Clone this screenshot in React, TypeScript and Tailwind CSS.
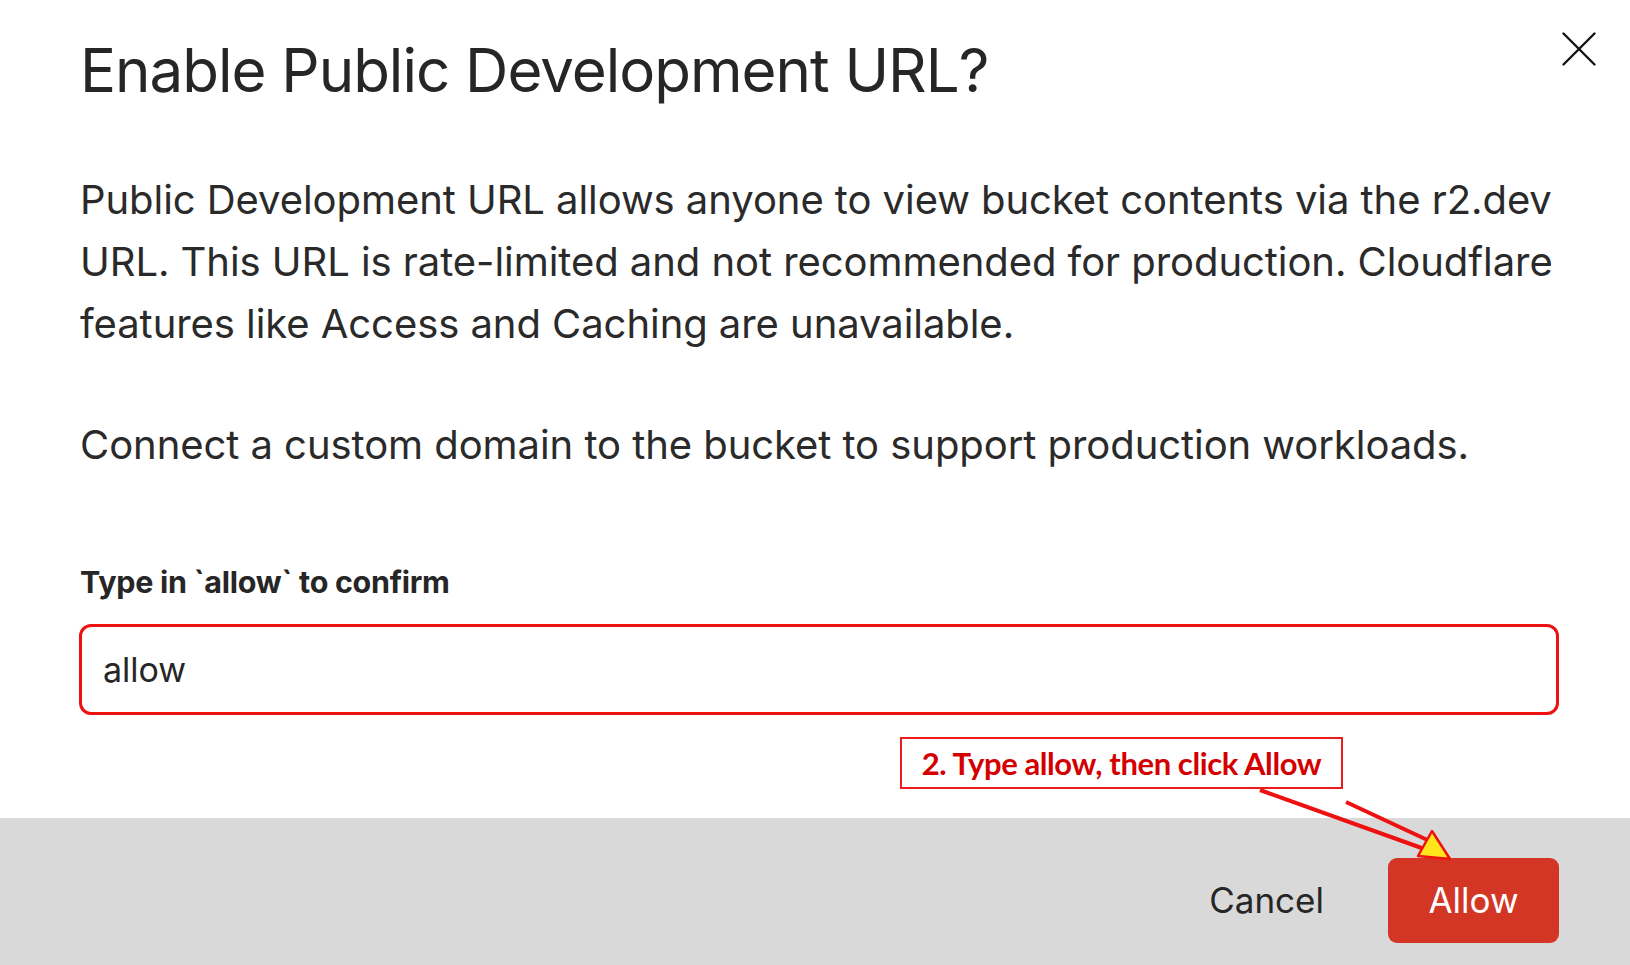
import { useState } from "react";

const inter = { fontFamily: "Inter, 'Noto Sans', sans-serif" };

function CloseIcon() {
  return (
    <svg width="34" height="34" viewBox="0 0 34 34" fill="none" stroke="#141414" strokeWidth="2.4" strokeLinecap="round">
      <line x1="1.5" y1="1.5" x2="32.5" y2="32.5" />
      <line x1="32.5" y1="1.5" x2="1.5" y2="32.5" />
    </svg>
  );
}

function Callout() {
  return (
    <>
      <div className="absolute left-[900px] top-[737px] flex h-[52px] w-[443px] items-center justify-center border-2 border-[#ee1c1c] bg-white">
        <span
          className="text-[31px] font-bold tracking-[-0.4px] text-[#d40000]"
          style={{ fontFamily: "'Liberation Sans Narrow', Lato, sans-serif" }}
        >
          2. Type allow, then click Allow
        </span>
      </div>
      <svg className="pointer-events-none absolute left-0 top-0" width="1630" height="965" viewBox="0 0 1630 965">
        <line x1="1260" y1="790" x2="1430" y2="851" stroke="#ee1111" strokeWidth="4" />
        <line x1="1346" y1="802" x2="1436" y2="844" stroke="#ee1111" strokeWidth="4" />
        <polygon points="1450,859 1418,856 1432,831" fill="#ffe51a" stroke="#ee1111" strokeWidth="2.5" strokeLinejoin="round" />
      </svg>
    </>
  );
}

export default function App() {
  const [value, setValue] = useState("allow");

  return (
    <div className="relative flex h-[965px] w-[1630px] flex-col overflow-hidden bg-white text-[#262626]" style={inter}>
      <div className="flex flex-1 flex-col pl-[80px] pr-[34px]">
        <div className="flex items-start justify-between">
          <h1 className="pt-[33px] text-[60px] leading-[74px] font-normal tracking-[-1px] text-[#262626]">
            Enable Public Development URL?
          </h1>
          <button type="button" className="mt-[32px]" aria-label="Close">
            <CloseIcon />
          </button>
        </div>

        <div className="mt-[62px] w-[1500px] text-[40px] leading-[62px] tracking-[-0.06px] text-[#2a2a2a]">
          <p>
            Public Development URL allows anyone to view bucket contents via the r2.dev URL. This URL is
            rate-limited and not recommended for production. Cloudflare features like Access and Caching are
            unavailable.
          </p>
          <p className="mt-[59px]">Connect a custom domain to the bucket to support production workloads.</p>
        </div>

        <label className="mt-[86px] text-[30.5px] leading-[40px] font-bold tracking-[-0.3px] text-[#262626]">
          Type in `allow` to confirm
        </label>
        <input
          className="mt-[22px] ml-[-1px] h-[91px] w-[1480px] rounded-[12px] border-[3px] border-[#ee1111] bg-white px-[21px] text-[34px] text-[#262626] outline-none"
          value={value}
          onChange={(e) => setValue(e.target.value)}
        />
      </div>

      <div className="flex h-[147px] items-start justify-end gap-[64px] bg-[#d9d9d9] pr-[71px] pt-[40px]">
        <button type="button" className="mt-[17px] text-[35px] leading-[50px] text-[#262626]">
          Cancel
        </button>
        <button type="button" className="flex h-[85px] w-[171px] items-center justify-center rounded-[9px] bg-[#d33624] text-[35px] text-white">
          Allow
        </button>
      </div>

      <Callout />
    </div>
  );
}
